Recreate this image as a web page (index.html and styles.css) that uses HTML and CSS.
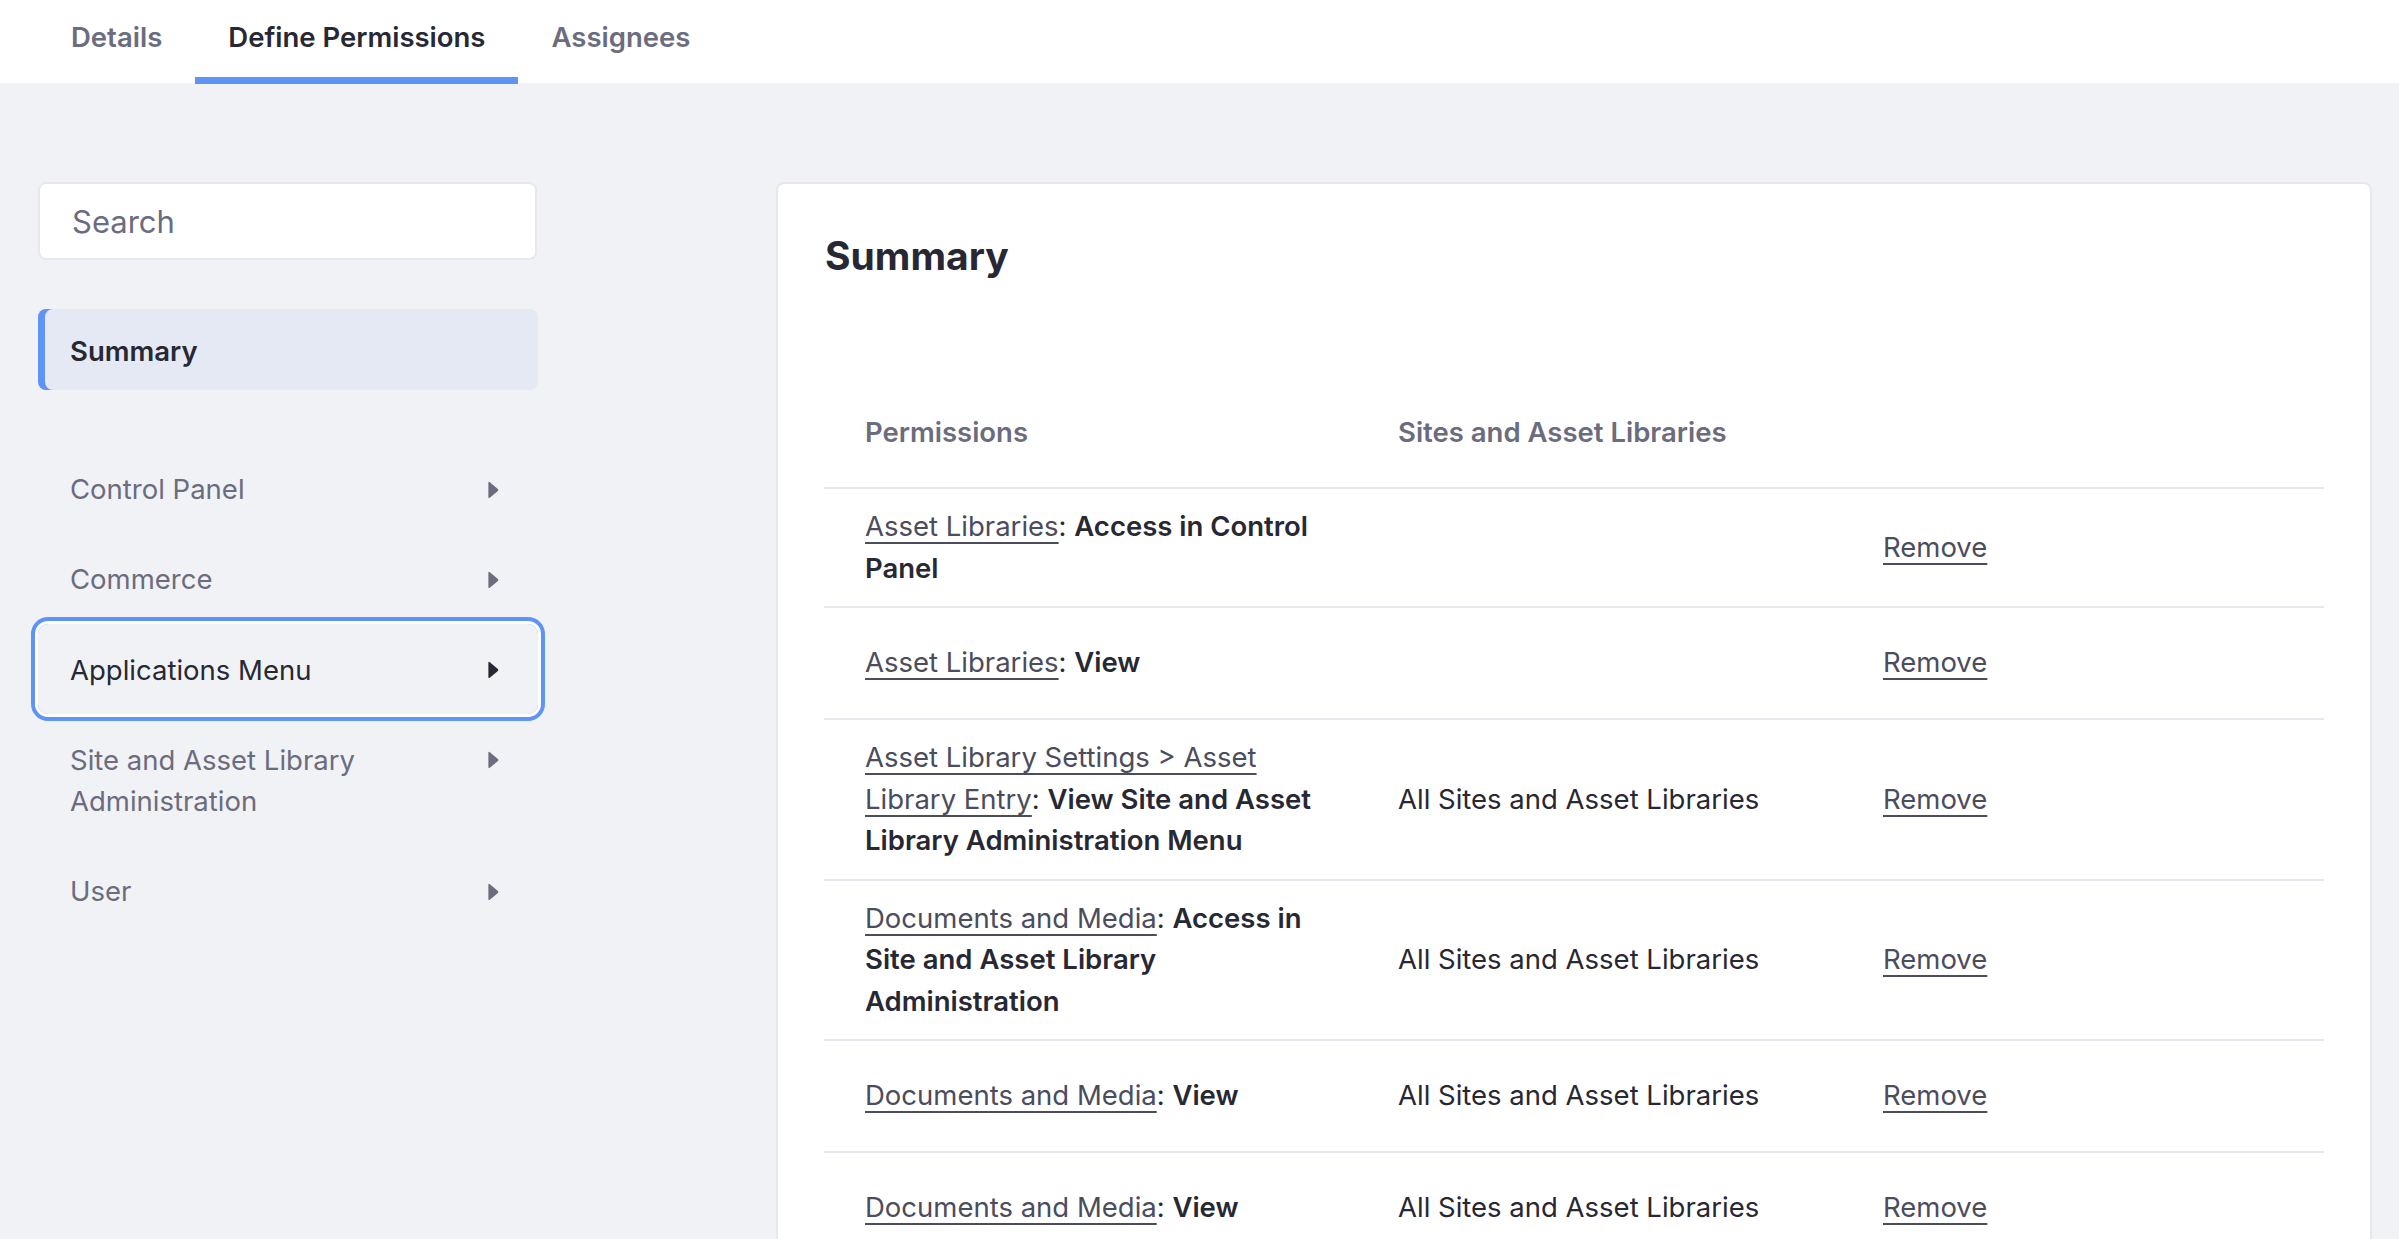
FILE: index.html
```html
<!DOCTYPE html>
<html lang="en">
<head>
<meta charset="utf-8">
<title>Define Permissions</title>
<link rel="stylesheet" href="styles.css">
</head>
<body>
<nav class="tabs">
  <a class="tab">Details</a>
  <a class="tab tab-active">Define Permissions</a>
  <a class="tab">Assignees</a>
</nav>
<div class="layout">
  <aside class="sidebar">
    <input class="search" type="text" placeholder="Search">
    <div class="nav-summary">Summary</div>
    <ul class="nav-list">
      <li class="nav-item"><span class="nav-label">Control Panel</span><span class="caret"><svg viewBox="0 0 11 18" width="11" height="18"><path d="M1.8 1.2 L9.9 7.9 Q10.9 9 9.9 10.1 L1.8 16.8 Q0.4 17.8 0.4 16 V2 Q0.4 0.2 1.8 1.2 Z"/></svg></span></li>
      <li class="nav-item"><span class="nav-label">Commerce</span><span class="caret"><svg viewBox="0 0 11 18" width="11" height="18"><path d="M1.8 1.2 L9.9 7.9 Q10.9 9 9.9 10.1 L1.8 16.8 Q0.4 17.8 0.4 16 V2 Q0.4 0.2 1.8 1.2 Z"/></svg></span></li>
      <li class="nav-item nav-focus"><span class="nav-label">Applications Menu</span><span class="caret"><svg viewBox="0 0 11 18" width="11" height="18"><path d="M1.8 1.2 L9.9 7.9 Q10.9 9 9.9 10.1 L1.8 16.8 Q0.4 17.8 0.4 16 V2 Q0.4 0.2 1.8 1.2 Z"/></svg></span></li>
      <li class="nav-item"><span class="nav-label">Site and Asset Library Administration</span><span class="caret"><svg viewBox="0 0 11 18" width="11" height="18"><path d="M1.8 1.2 L9.9 7.9 Q10.9 9 9.9 10.1 L1.8 16.8 Q0.4 17.8 0.4 16 V2 Q0.4 0.2 1.8 1.2 Z"/></svg></span></li>
      <li class="nav-item"><span class="nav-label">User</span><span class="caret"><svg viewBox="0 0 11 18" width="11" height="18"><path d="M1.8 1.2 L9.9 7.9 Q10.9 9 9.9 10.1 L1.8 16.8 Q0.4 17.8 0.4 16 V2 Q0.4 0.2 1.8 1.2 Z"/></svg></span></li>
    </ul>
  </aside>
  <main class="card">
    <h2 class="card-title">Summary</h2>
    <table class="perm-table">
      <colgroup>
        <col class="col-perm">
        <col class="col-sites">
        <col class="col-action">
      </colgroup>
      <thead>
        <tr><th>Permissions</th><th>Sites and Asset Libraries</th><th></th></tr>
      </thead>
      <tbody>
        <tr>
          <td><a class="res-link">Asset Libraries</a>: <strong>Access in Control Panel</strong></td>
          <td></td>
          <td><a class="remove">Remove</a></td>
        </tr>
        <tr>
          <td><a class="res-link">Asset Libraries</a>: <strong>View</strong></td>
          <td></td>
          <td><a class="remove">Remove</a></td>
        </tr>
        <tr>
          <td><a class="res-link">Asset Library Settings &gt; Asset Library Entry</a>: <strong>View Site and Asset Library Administration Menu</strong></td>
          <td>All Sites and Asset Libraries</td>
          <td><a class="remove">Remove</a></td>
        </tr>
        <tr>
          <td><a class="res-link">Documents and Media</a>: <strong>Access in Site and Asset Library Administration</strong></td>
          <td>All Sites and Asset Libraries</td>
          <td><a class="remove">Remove</a></td>
        </tr>
        <tr>
          <td><a class="res-link">Documents and Media</a>: <strong>View</strong></td>
          <td>All Sites and Asset Libraries</td>
          <td><a class="remove">Remove</a></td>
        </tr>
        <tr>
          <td><a class="res-link">Documents and Media</a>: <strong>View</strong></td>
          <td>All Sites and Asset Libraries</td>
          <td><a class="remove">Remove</a></td>
        </tr>
      </tbody>
    </table>
  </main>
</div>
</body>
</html>
```

FILE: styles.css
```css
* { box-sizing: border-box; }

html, body {
  margin: 0;
  height: 100%;
  overflow: hidden;
}

body {
  background: #f1f2f5;
  font-family: Inter, "Noto Sans", "Liberation Sans", sans-serif;
  color: #272833;
  font-size: 27.5px;
  line-height: 41.25px;
}

/* Tabs */
.tabs {
  display: flex;
  height: 83px;
  background: #ffffff;
  padding-left: 38px;
}

.tab {
  position: relative;
  padding: 16.5px 33px 0;
  font-weight: 600;
  color: #6b6c7e;
  cursor: pointer;
}

.tab-active {
  color: #272833;
}

.tab-active::after {
  content: "";
  position: absolute;
  left: 0;
  right: 0;
  bottom: -1px;
  height: 7px;
  background: #5f93f5;
}

/* Layout */
.layout {
  display: flex;
  align-items: flex-start;
  gap: 238px;
  padding: 99px 27px 0 38px;
}

.sidebar {
  width: 500px;
  flex: none;
}

.search {
  display: block;
  width: 499px;
  height: 78px;
  border: 2px solid #e7e7ed;
  border-radius: 8px;
  background: #fff;
  padding: 0 32px;
  font-family: inherit;
  font-size: 31px;
  color: #272833;
  outline: none;
}

.search::placeholder {
  color: #6b6c7e;
}

.nav-summary {
  margin-top: 49px;
  height: 81px;
  padding: 21.5px 32px 18.5px;
  background: #e5e9f4;
  border-radius: 8px;
  box-shadow: inset 7px 0 0 #5f93f5;
  font-weight: 600;
  color: #272833;
}

.nav-list {
  list-style: none;
  margin: 53px 0 0;
  padding: 0;
}

.nav-item {
  display: flex;
  justify-content: space-between;
  align-items: flex-start;
  gap: 40px;
  padding: 26px 39px 23px 32px;
  color: #6b6c7e;
  border-radius: 10px;
}

.nav-label {
  max-width: 400px;
}

.caret {
  flex: none;
  display: flex;
  align-items: center;
  height: 41.25px;
  fill: #6b6c7e;
}

.caret svg {
  flex: none;
  display: block;
}

.nav-focus {
  color: #272833;
  box-shadow: 0 0 0 3px #ffffff, 0 0 0 7px #5f93f5;
}

.nav-focus .caret {
  fill: #272833;
}

/* Card */
.card {
  flex: 1;
  background: #ffffff;
  border: 2px solid #e7e7ed;
  border-radius: 8px;
  padding: 48px 46px 0;
  min-height: 1200px;
}

.card-title {
  margin: 0 0 113.5px 1px;
  font-size: 39px;
  line-height: 47px;
  font-weight: 700;
  color: #272833;
}

.perm-table {
  width: 100%;
  border-collapse: collapse;
  table-layout: fixed;
}

.col-perm { width: 533px; }
.col-sites { width: 485px; }

.perm-table th {
  text-align: left;
  font-weight: 600;
  color: #6b6c7e;
  padding: 19px 41px 34px;
}

.perm-table td {
  border-top: 2px solid #e7e7ed;
  padding: 17.5px 41px;
  vertical-align: middle;
  color: #272833;
}

.perm-table strong {
  font-weight: 600;
}

.res-link,
.remove {
  color: #4b4c5c;
  text-decoration: underline;
  text-decoration-thickness: 2px;
  text-underline-offset: 6px;
  cursor: pointer;
}

.remove {
  display: inline-flex;
  align-items: center;
  height: 74.5px;
}
```
